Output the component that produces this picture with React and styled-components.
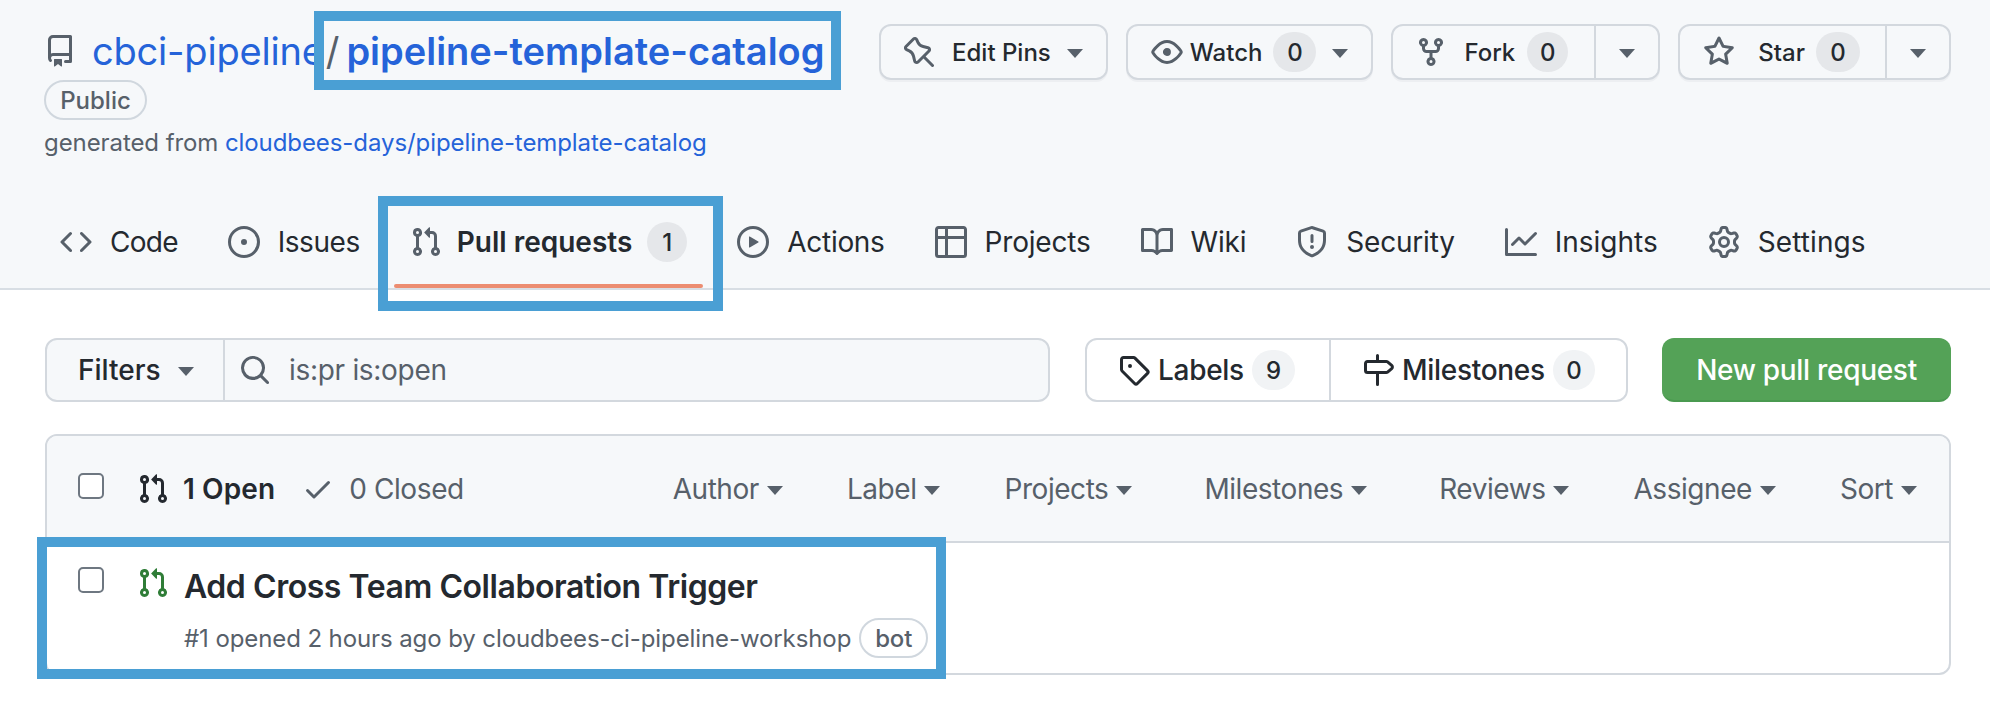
import React from 'react';
import styled, { createGlobalStyle } from 'styled-components';

const P = {
  repo: 'M2 2.5A2.5 2.5 0 0 1 4.5 0h8.75a.75.75 0 0 1 .75.75v12.5a.75.75 0 0 1-.75.75h-2.5a.75.75 0 0 1 0-1.5h1.75v-2h-8a1 1 0 0 0-.714 1.7.75.75 0 1 1-1.072 1.05A2.495 2.495 0 0 1 2 11.5Zm10.5-1h-8a1 1 0 0 0-1 1v6.708A2.486 2.486 0 0 1 4.5 9h8ZM5 12.25a.25.25 0 0 1 .25-.25h3.5a.25.25 0 0 1 .25.25v3.25a.25.25 0 0 1-.4.2l-1.45-1.087a.249.249 0 0 0-.3 0L5.4 15.7a.25.25 0 0 1-.4-.2Z',
  pin: 'm11.294.984 3.722 3.722a1.75 1.75 0 0 1-.504 2.826l-1.327.613a3.089 3.089 0 0 0-1.707 2.084l-.584 2.454c-.317 1.332-1.972 1.8-2.94.832L5.75 11.311 1.78 15.28a.749.749 0 1 1-1.06-1.06l3.969-3.97-2.204-2.204c-.968-.968-.5-2.623.832-2.94l2.454-.584a3.08 3.08 0 0 0 2.084-1.707l.613-1.327a1.75 1.75 0 0 1 2.826-.504ZM6.283 9.723l2.732 2.731a.25.25 0 0 0 .42-.119l.584-2.454a4.586 4.586 0 0 1 2.537-3.098l1.328-.613a.25.25 0 0 0 .072-.404l-3.722-3.722a.25.25 0 0 0-.404.072l-.613 1.328a4.584 4.584 0 0 1-3.098 2.537l-2.454.584a.25.25 0 0 0-.119.42l2.731 2.732Z',
  eye: 'M8 2c1.981 0 3.671.992 4.933 2.078 1.27 1.091 2.187 2.345 2.637 3.023a1.62 1.62 0 0 1 0 1.798c-.45.678-1.367 1.932-2.637 3.023C11.67 13.008 9.981 14 8 14c-1.981 0-3.671-.992-4.933-2.078C1.797 10.83.88 9.576.43 8.898a1.62 1.62 0 0 1 0-1.798c.45-.677 1.367-1.931 2.637-3.022C4.33 2.992 6.019 2 8 2ZM1.679 7.932a.12.12 0 0 0 0 .136c.411.622 1.241 1.75 2.366 2.717C5.176 11.758 6.527 12.5 8 12.5c1.473 0 2.825-.742 3.955-1.715 1.124-.967 1.954-2.096 2.366-2.717a.12.12 0 0 0 0-.136c-.412-.621-1.242-1.75-2.366-2.717C10.824 4.242 9.473 3.5 8 3.5c-1.473 0-2.825.742-3.955 1.715-1.124.967-1.954 2.096-2.366 2.717ZM8 10a2 2 0 1 1-.001-3.999A2 2 0 0 1 8 10Z',
  fork: 'M5 5.372v.878c0 .414.336.75.75.75h4.5a.75.75 0 0 0 .75-.75v-.878a2.25 2.25 0 1 1 1.5 0v.878a2.25 2.25 0 0 1-2.25 2.25h-1.5v2.128a2.251 2.251 0 1 1-1.5 0V8.5h-1.5A2.25 2.25 0 0 1 3.5 6.25v-.878a2.25 2.25 0 1 1 1.5 0ZM5 3.25a.75.75 0 1 0-1.5 0 .75.75 0 0 0 1.5 0Zm6.75.75a.75.75 0 1 0 0-1.5.75.75 0 0 0 0 1.5Zm-3 8.75a.75.75 0 1 0-1.5 0 .75.75 0 0 0 1.5 0Z',
  star: 'M8 .25a.75.75 0 0 1 .673.418l1.882 3.815 4.21.612a.75.75 0 0 1 .416 1.279l-3.046 2.97.719 4.192a.751.751 0 0 1-1.088.791L8 12.347l-3.766 1.98a.75.75 0 0 1-1.088-.79l.72-4.194L.818 6.374a.75.75 0 0 1 .416-1.28l4.21-.611L7.327.668A.75.75 0 0 1 8 .25Zm0 2.445L6.615 5.5a.75.75 0 0 1-.564.41l-3.097.45 2.24 2.184a.75.75 0 0 1 .216.664l-.528 3.084 2.769-1.456a.75.75 0 0 1 .698 0l2.77 1.456-.53-3.084a.75.75 0 0 1 .216-.664l2.24-2.183-3.096-.45a.75.75 0 0 1-.564-.41L8 2.694Z',
  code: 'm11.28 3.22 4.25 4.25a.75.75 0 0 1 0 1.06l-4.25 4.25a.749.749 0 0 1-1.275-.326.749.749 0 0 1 .215-.734L13.94 8l-3.72-3.72a.749.749 0 0 1 .326-1.275.749.749 0 0 1 .734.215Zm-6.56 0a.751.751 0 0 1 1.042.018.751.751 0 0 1 .018 1.042L2.06 8l3.72 3.72a.749.749 0 0 1-.326 1.275.749.749 0 0 1-.734-.215L.47 8.53a.75.75 0 0 1 0-1.06Z',
  issue: 'M8 9.5a1.5 1.5 0 1 0 0-3 1.5 1.5 0 0 0 0 3Z M8 0a8 8 0 1 1 0 16A8 8 0 0 1 8 0ZM1.5 8a6.5 6.5 0 1 0 13 0 6.5 6.5 0 0 0-13 0Z',
  pr: 'M1.5 3.25a2.25 2.25 0 1 1 3 2.122v5.256a2.251 2.251 0 1 1-1.5 0V5.372A2.25 2.25 0 0 1 1.5 3.25Zm5.677-.177L9.573.677A.25.25 0 0 1 10 .854V2.5h1A2.5 2.5 0 0 1 13.5 5v5.628a2.251 2.251 0 1 1-1.5 0V5a1 1 0 0 0-1-1h-1v1.646a.25.25 0 0 1-.427.177L7.177 3.427a.25.25 0 0 1 0-.354ZM3.75 2.5a.75.75 0 1 0 0 1.5.75.75 0 0 0 0-1.5Zm0 9.5a.75.75 0 1 0 0 1.5.75.75 0 0 0 0-1.5Zm8.25.75a.75.75 0 1 0 1.5 0 .75.75 0 0 0-1.5 0Z',
  play: 'M8 0a8 8 0 1 1 0 16A8 8 0 0 1 8 0ZM1.5 8a6.5 6.5 0 1 0 13 0 6.5 6.5 0 0 0-13 0Zm4.879-2.773 4.264 2.559a.25.25 0 0 1 0 .428l-4.264 2.559A.25.25 0 0 1 6 10.559V5.442a.25.25 0 0 1 .379-.215Z',
  table: 'M0 1.75C0 .784.784 0 1.75 0h12.5C15.216 0 16 .784 16 1.75v12.5A1.75 1.75 0 0 1 14.25 16H1.75A1.75 1.75 0 0 1 0 14.25ZM6.5 6.5v8h7.75a.25.25 0 0 0 .25-.25V6.5Zm8-1.5V1.75a.25.25 0 0 0-.25-.25H6.5V5Zm-13 1.5v7.75c0 .138.112.25.25.25H5v-8ZM5 5V1.5H1.75a.25.25 0 0 0-.25.25V5Z',
  book: 'M0 1.75A.75.75 0 0 1 .75 1h4.253c1.227 0 2.317.59 3 1.501A3.743 3.743 0 0 1 11.006 1h4.245a.75.75 0 0 1 .75.75v10.5a.75.75 0 0 1-.75.75h-4.507a2.25 2.25 0 0 0-1.591.659l-.622.621a.75.75 0 0 1-1.06 0l-.622-.621A2.25 2.25 0 0 0 5.258 13H.75a.75.75 0 0 1-.75-.75Zm7.251 10.324.004-5.073-.002-2.253A2.25 2.25 0 0 0 5.003 2.5H1.5v9h3.757a3.75 3.75 0 0 1 1.994.574ZM8.755 4.75l-.004 7.322a3.752 3.752 0 0 1 1.992-.572H14.5v-9h-3.495a2.25 2.25 0 0 0-2.25 2.25Z',
  shield: 'M7.467.133a1.748 1.748 0 0 1 1.066 0l5.25 1.68A1.75 1.75 0 0 1 15 3.48V7c0 1.566-.32 3.182-1.303 4.682-.983 1.498-2.585 2.813-5.032 3.855a1.697 1.697 0 0 1-1.33 0c-2.447-1.042-4.049-2.357-5.032-3.855C1.32 10.182 1 8.566 1 7V3.48a1.75 1.75 0 0 1 1.217-1.667Zm.61 1.429a.25.25 0 0 0-.153 0l-5.25 1.68a.25.25 0 0 0-.174.238V7c0 1.358.275 2.666 1.057 3.86.784 1.194 2.121 2.34 4.366 3.297a.196.196 0 0 0 .154 0c2.245-.956 3.582-2.104 4.366-3.298C13.225 9.666 13.5 8.36 13.5 7V3.48a.251.251 0 0 0-.174-.237l-5.25-1.68ZM8.75 4.75v3a.75.75 0 0 1-1.5 0v-3a.75.75 0 0 1 1.5 0ZM9 10.5a1 1 0 1 1-2 0 1 1 0 0 1 2 0Z',
  graph: 'M1.5 1.75V13.5h13.75a.75.75 0 0 1 0 1.5H.75a.75.75 0 0 1-.75-.75V1.75a.75.75 0 0 1 1.5 0Zm14.28 2.53-5.25 5.25a.75.75 0 0 1-1.06 0L7 7.06 4.28 9.78a.751.751 0 0 1-1.042-.018.751.751 0 0 1-.018-1.042l3.25-3.25a.75.75 0 0 1 1.06 0L10 7.94l4.72-4.72a.751.751 0 0 1 1.042.018.751.751 0 0 1 .018 1.042Z',
  gear: 'M8 0a8.2 8.2 0 0 1 .701.031C9.444.095 9.99.645 10.16 1.29l.288 1.107c.018.066.079.158.212.224.231.114.454.243.668.386.123.082.233.09.299.071l1.103-.303c.644-.176 1.392.021 1.82.63.27.385.506.792.704 1.218.315.675.111 1.422-.364 1.891l-.814.806c-.049.048-.098.147-.088.294.016.257.016.515 0 .772-.01.147.038.246.088.294l.814.806c.475.469.679 1.216.364 1.891a7.977 7.977 0 0 1-.704 1.217c-.428.61-1.176.807-1.82.63l-1.102-.302c-.067-.019-.177-.011-.3.071a5.909 5.909 0 0 1-.668.386c-.133.066-.194.158-.211.224l-.29 1.106c-.168.646-.715 1.196-1.458 1.26a8.006 8.006 0 0 1-1.402 0c-.743-.064-1.289-.614-1.458-1.26l-.289-1.106c-.018-.066-.079-.158-.212-.224a5.738 5.738 0 0 1-.668-.386c-.123-.082-.233-.09-.299-.071l-1.103.303c-.644.176-1.392-.021-1.82-.63a8.12 8.12 0 0 1-.704-1.218c-.315-.675-.111-1.422.363-1.891l.815-.806c.05-.048.098-.147.088-.294a6.214 6.214 0 0 1 0-.772c.01-.147-.038-.246-.088-.294l-.815-.806C.635 6.045.431 5.298.746 4.623a7.92 7.92 0 0 1 .704-1.217c.428-.61 1.176-.807 1.82-.63l1.102.302c.067.019.177.011.3-.071.214-.143.437-.272.668-.386.133-.066.194-.158.211-.224l.29-1.106C6.009.645 6.556.095 7.299.03 7.53.01 7.764 0 8 0Zm-.571 1.525c-.036.003-.108.036-.137.146l-.289 1.105c-.147.561-.549.967-.998 1.189-.173.086-.34.183-.5.29-.417.278-.97.423-1.529.27l-1.103-.303c-.109-.03-.175.016-.195.045-.22.312-.412.644-.573.99-.014.031-.021.11.059.19l.815.806c.411.406.562.957.53 1.456a4.709 4.709 0 0 0 0 .582c.032.499-.119 1.05-.53 1.456l-.815.806c-.081.08-.073.159-.059.19.162.346.353.677.573.989.02.03.085.076.195.046l1.102-.303c.56-.153 1.113-.008 1.53.27.161.107.328.204.501.29.447.222.85.629.997 1.189l.289 1.105c.029.109.101.143.137.146a6.6 6.6 0 0 0 1.142 0c.036-.003.108-.036.137-.146l.289-1.105c.147-.561.549-.967.998-1.189.173-.086.34-.183.5-.29.417-.278.97-.423 1.529-.27l1.103.303c.109.029.175-.016.195-.045.22-.313.411-.644.573-.99.014-.031.021-.11-.059-.19l-.815-.806c-.411-.406-.562-.957-.53-1.456a4.709 4.709 0 0 0 0-.582c-.032-.499.119-1.05.53-1.456l.815-.806c.081-.08.073-.159.059-.19a6.464 6.464 0 0 0-.573-.989c-.02-.03-.085-.076-.195-.046l-1.102.303c-.56.153-1.113.008-1.53-.27a4.44 4.44 0 0 0-.501-.29c-.447-.222-.85-.629-.997-1.189l-.289-1.105c-.029-.11-.101-.143-.137-.146a6.6 6.6 0 0 0-1.142 0ZM11 8a3 3 0 1 1-6 0 3 3 0 0 1 6 0ZM9.5 8a1.5 1.5 0 1 0-3.001.001A1.5 1.5 0 0 0 9.5 8Z',
  search: 'M10.68 11.74a6 6 0 0 1-7.922-8.982 6 6 0 0 1 8.982 7.922l3.04 3.04a.749.749 0 0 1-.326 1.275.749.749 0 0 1-.734-.215ZM11.5 7a4.499 4.499 0 1 0-8.997 0A4.499 4.499 0 0 0 11.5 7Z',
  tag: 'M1 7.775V2.75C1 1.784 1.784 1 2.75 1h5.025c.464 0 .91.184 1.238.513l6.25 6.25a1.75 1.75 0 0 1 0 2.474l-5.026 5.026a1.75 1.75 0 0 1-2.474 0l-6.25-6.25A1.752 1.752 0 0 1 1 7.775Zm1.5 0c0 .066.026.13.073.177l6.25 6.25a.25.25 0 0 0 .354 0l5.025-5.025a.25.25 0 0 0 0-.354l-6.25-6.25a.25.25 0 0 0-.177-.073H2.75a.25.25 0 0 0-.25.25ZM6 5a1 1 0 1 1 0 2 1 1 0 0 1 0-2Z',
  milestone: 'M7.75 0a.75.75 0 0 1 .75.75V3h3.634c.414 0 .814.147 1.13.414l2.07 1.75a1.75 1.75 0 0 1 0 2.672l-2.07 1.75a1.75 1.75 0 0 1-1.13.414H8.5v5.25a.75.75 0 0 1-1.5 0V10H2.75A1.75 1.75 0 0 1 1 8.25v-3.5C1 3.784 1.784 3 2.75 3H7V.75A.75.75 0 0 1 7.75 0Zm4.384 8.5a.25.25 0 0 0 .161-.06l2.07-1.75a.248.248 0 0 0 0-.38l-2.07-1.75a.25.25 0 0 0-.161-.06H2.75a.25.25 0 0 0-.25.25v3.5c0 .138.112.25.25.25h9.384Z',
  check: 'M13.78 4.22a.75.75 0 0 1 0 1.06l-7.25 7.25a.75.75 0 0 1-1.06 0L2.22 9.28a.751.751 0 0 1 .018-1.042.751.751 0 0 1 1.042-.018L6 10.94l6.72-6.72a.75.75 0 0 1 1.06 0Z',
};

const Svg = styled.svg`display: block; flex: none; fill: currentColor;`;
const Oct = ({ n, flip }) => (
  <Svg viewBox="0 0 16 16" width={32} height={32}>
    <path d={P[n]} transform={flip ? 'matrix(-1 0 0 1 16 0)' : undefined} />
  </Svg>
);

const Global = createGlobalStyle`
  html, body { margin: 0; padding: 0; background: #fff; }
  body { font-family: Inter, "Liberation Sans", sans-serif; color: #24292f; width: 1990px; height: 726px; overflow: hidden; }
  a { text-decoration: none; color: inherit; }
`;

const Page = styled.div`position: relative; width: 1990px; height: 726px;`;

const Header = styled.header`
  background: #f6f8fa;
  border-bottom: 2px solid #d8dee4;
  height: 290px;
  box-sizing: border-box;
  padding: 24px 39px 0 44px;
  display: flex;
  flex-direction: column;
`;
const TopRow = styled.div`display: flex; justify-content: space-between; align-items: flex-start; height: 172px;`;
const RepoBlock = styled.div`display: flex; flex-direction: column; align-items: flex-start;`;
const TitleLine = styled.div`
  display: flex; align-items: center; gap: 16px; height: 54px; font-size: 38px; color: #2563d9;
  svg { color: #57606a; }
`;
const TitleText = styled.div`display: flex; align-items: center;`;
const Owner = styled.a`letter-spacing: -0.2px;`;
const Slash = styled.span`color: #57606a; margin: 0 7px 0 2px;`;
const RepoName = styled.a`font-weight: 600;`;
const VisibilityBadge = styled.span`
  display: inline-flex; align-items: center; justify-content: center; box-sizing: border-box;
  width: 103px; height: 40px; margin-top: 2px;
  border: 2px solid #d0d7de; border-radius: 20px; font-size: 24px; font-weight: 500; color: #57606a;
`;
const Generated = styled.div`
  margin-top: 7px; font-size: 24px; line-height: 32px; color: #57606a; letter-spacing: -0.08px;
  a { color: #2563d9; }
`;
const Actions = styled.div`display: flex; gap: 18px;`;
const Btn = styled.div`
  display: flex; align-items: stretch; box-sizing: border-box; height: 56px;
  background: #f6f8fa; border: 2px solid #d3d8de; border-radius: 12px;
  box-shadow: 0 2px 0 rgba(31,35,40,.04);
  font-size: 24px; font-weight: 500; color: #24292f;
`;
const BtnMain = styled.div`
  display: flex; align-items: center; padding: 0 ${p => p.$pr}px 0 ${p => p.$pl}px;
  svg { color: #57606a; }
`;
const BtnLabel = styled.span`margin-left: ${p => p.$ml}px;`;
const BtnSide = styled.div`
  display: flex; align-items: center; justify-content: center; width: 64px; box-sizing: border-box;
  border-left: 2px solid #d3d8de;
`;
const Counter = styled.span`
  display: inline-flex; align-items: center; justify-content: center; flex: none; min-width: ${p => p.$w || 42}px; height: 40px;
  border-radius: 20px; background: ${p => p.$light ? '#f1f3f5' : '#e5e7ea'}; font-size: 24px; font-weight: 500; color: #24292f;
  margin-left: ${p => p.$ml || 0}px;
`;
const Caret = styled.span`
  display: inline-block; flex: none; width: 0; height: 0;
  border-left: 8px solid transparent; border-right: 8px solid transparent; border-top: 9px solid #57606a;
  margin-left: ${p => p.$ml || 0}px; margin-top: 3px;
`;

const Tabs = styled.nav`display: flex; gap: 18px; height: 94px;`;
const Tab = styled.a`
  position: relative; display: flex; align-items: center; gap: ${p => p.$active ? 15 : 18}px; padding: 2px 16px 0; height: 94px; box-sizing: border-box;
  font-size: 28px; letter-spacing: ${p => p.$ls ?? -0.2}px; color: #24292f; font-weight: ${p => p.$active ? 600 : 400};
  svg { color: #57606a; }
  ${p => p.$active && `
    &::after { content: ""; position: absolute; left: 0; right: 0; bottom: 0; height: 4px; background: #ec8d71; border-radius: 3px; }
  `}
`;

const Main = styled.main`padding: 48px 39px 0 45px;`;
const Controls = styled.div`display: flex; align-items: stretch; height: 64px;`;
const FilterGroup = styled.div`
  display: flex; flex: none; width: 1005px; box-sizing: border-box; border: 2px solid #d3d8de; border-radius: 12px; background: #f6f8fa;
`;
const FiltersBtn = styled.div`
  display: flex; align-items: center; width: 178px; box-sizing: border-box; padding-left: 31px;
  font-size: 28px; font-weight: 500; border-right: 2px solid #d3d8de;
`;
const SearchBox = styled.div`
  display: flex; align-items: center; gap: 18px; padding-left: 14px; font-size: 28px; letter-spacing: -0.3px; color: #57606a;
`;
const LabelGroup = styled.div`
  display: flex; flex: none; margin-left: 35px; width: 543px; box-sizing: border-box; border: 2px solid #d3d8de; border-radius: 12px;
`;
const LabelLink = styled.a`
  display: flex; align-items: center; gap: 8px; padding-left: 31px; font-size: 28px; font-weight: 500; letter-spacing: -0.3px; color: #24292f;
  width: ${p => p.$w}px; box-sizing: border-box;
  & + & { border-left: 2px solid #d3d8de; }
`;
const NewPR = styled.a`
  display: flex; align-items: center; justify-content: center; flex: none; margin-left: 34px; width: 289px; padding-top: 2px;
  background: #54a257; border-radius: 12px; border-bottom: 2px solid #4a9a50; box-sizing: border-box;
  color: #fff; font-size: 28px; font-weight: 500; letter-spacing: -0.3px;
`;

const Table = styled.section`
  margin-top: 32px; width: 1906px; height: 241px; box-sizing: border-box;
  border: 2px solid #d3d8de; border-radius: 12px; overflow: hidden;
`;
const TableHead = styled.div`
  display: flex; align-items: center; height: 107px; box-sizing: border-box; background: #f6f8fa;
  border-bottom: 2px solid #d3d8de; padding: 0 32px 0 31px;
`;
const Check = styled.span`
  display: block; flex: none; width: 26px; height: 26px; box-sizing: border-box; border: 2px solid #6e7781; border-radius: 5px; background: #fff;
  ${p => p.$lift && 'margin-top: -6px;'}
`;
const StateTabs = styled.div`display: flex; align-items: center; font-size: 28px; margin-left: 33px;`;
const StateLink = styled.a`
  display: flex; align-items: center; gap: ${p => p.$gap}px; margin-left: ${p => p.$ml || 0}px;
  letter-spacing: ${p => p.$on ? 0.1 : -0.4}px;
  color: ${p => p.$on ? '#24292f' : '#57606a'}; font-weight: ${p => p.$on ? 600 : 400};
  svg { color: ${p => p.$on ? '#24292f' : '#57606a'}; }
`;
const SortBar = styled.div`display: flex; align-items: center; gap: 64px; margin-left: auto; font-size: 28px; letter-spacing: -0.45px; color: #57606a;`;
const SortItem = styled.span`display: flex; align-items: center; gap: 8px; margin-left: ${p => p.$ml || 0}px;`;

const Row = styled.div`display: flex; padding: 24px 0 0 31px;`;
const RowIcon = styled.span`display: block; margin-left: 33px; color: #2f7d37;`;
const RowBody = styled.div`margin-left: 15px; display: flex; flex-direction: column;`;
const RowTitle = styled.a`font-size: 32px; font-weight: 600; letter-spacing: -0.45px; line-height: 44px; margin-top: -2px; color: #24292f;`;
const Meta = styled.div`display: flex; align-items: center; margin-top: 9px; font-size: 24px; letter-spacing: -0.1px; color: #57606a;`;
const BotBadge = styled.span`
  display: inline-flex; align-items: center; justify-content: center; width: 69px; height: 40px; box-sizing: border-box; margin-left: 8px;
  border: 2px solid #d0d7de; border-radius: 20px; font-weight: 500; font-size: 24px;
`;
const Annotation = styled.div`
  position: absolute; box-sizing: border-box; border: 10px solid #4a9fd4; pointer-events: none;
  left: ${p => p.$x}px; top: ${p => p.$y}px; width: ${p => p.$w}px; height: ${p => p.$h}px;
`;

const SORTS = [
  ['Author', 0], ['Label', 0], ['Projects', 0], ['Milestones', 8], ['Reviews', 8], ['Assignee', 0], ['Sort', 0],
];

export default function App() {
  return (
    <Page>
      <Global />
      <Header>
        <TopRow>
          <RepoBlock>
            <TitleLine>
              <Oct n="repo" />
              <TitleText><Owner>cbci-pipeline</Owner><Slash>/</Slash><RepoName>pipeline-template-catalog</RepoName></TitleText>
            </TitleLine>
            <VisibilityBadge>Public</VisibilityBadge>
            <Generated>generated from <a>cloudbees-days/pipeline-template-catalog</a></Generated>
          </RepoBlock>
          <Actions>
            <Btn><BtnMain $pl={22} $pr={23}><Oct n="pin" flip /><BtnLabel $ml={17}>Edit Pins</BtnLabel><Caret $ml={16} /></BtnMain></Btn>
            <Btn><BtnMain $pl={23} $pr={23}><Oct n="eye" /><BtnLabel $ml={7}>Watch</BtnLabel><Counter $ml={11} $w={43}>0</Counter><Caret $ml={16} /></BtnMain></Btn>
            <Btn><BtnMain $pl={22} $pr={26}><Oct n="fork" /><BtnLabel $ml={17}>Fork</BtnLabel><Counter $ml={12} $w={41}>0</Counter></BtnMain><BtnSide><Caret /></BtnSide></Btn>
            <Btn><BtnMain $pl={23} $pr={25}><Oct n="star" /><BtnLabel $ml={23}>Star</BtnLabel><Counter $ml={11} $w={44}>0</Counter></BtnMain><BtnSide><Caret /></BtnSide></Btn>
          </Actions>
        </TopRow>
        <Tabs>
          <Tab $ls={-0.75}><Oct n="code" />Code</Tab>
          <Tab $ls={-0.45}><Oct n="issue" />Issues</Tab>
          <Tab $active $ls={0}><Oct n="pr" />Pull requests<Counter $w={40}>1</Counter></Tab>
          <Tab $ls={-0.3}><Oct n="play" />Actions</Tab>
          <Tab><Oct n="table" />Projects</Tab>
          <Tab><Oct n="book" />Wiki</Tab>
          <Tab><Oct n="shield" />Security</Tab>
          <Tab $ls={0}><Oct n="graph" />Insights</Tab>
          <Tab $ls={0.1}><Oct n="gear" />Settings</Tab>
        </Tabs>
      </Header>
      <Main>
        <Controls>
          <FilterGroup>
            <FiltersBtn>Filters<Caret $ml={17} /></FiltersBtn>
            <SearchBox><Oct n="search" />is:pr is:open</SearchBox>
          </FilterGroup>
          <LabelGroup>
            <LabelLink $w={242}><Oct n="tag" />Labels<Counter $light $w={43}>9</Counter></LabelLink>
            <LabelLink $w={297}><Oct n="milestone" />Milestones<Counter $light $w={42}>0</Counter></LabelLink>
          </LabelGroup>
          <NewPR>New pull request</NewPR>
        </Controls>
        <Table>
          <TableHead>
            <Check $lift />
            <StateTabs>
              <StateLink $on $gap={14}><Oct n="pr" />1 Open</StateLink>
              <StateLink $ml={27} $gap={15}><Oct n="check" />0 Closed</StateLink>
            </StateTabs>
            <SortBar>
              {SORTS.map(([s, ml]) => (
                <SortItem key={s} $ml={ml}>{s}<Caret /></SortItem>
              ))}
            </SortBar>
          </TableHead>
          <Row>
            <Check />
            <RowIcon><Oct n="pr" /></RowIcon>
            <RowBody>
              <RowTitle>Add Cross Team Collaboration Trigger</RowTitle>
              <Meta>#1 opened 2 hours ago by cloudbees-ci-pipeline-workshop<BotBadge>bot</BotBadge></Meta>
            </RowBody>
          </Row>
        </Table>
      </Main>
      <Annotation $x={314} $y={11} $w={527} $h={79} />
      <Annotation $x={378} $y={196} $w={345} $h={115} />
      <Annotation $x={37} $y={537} $w={909} $h={142} />
    </Page>
  );
}
